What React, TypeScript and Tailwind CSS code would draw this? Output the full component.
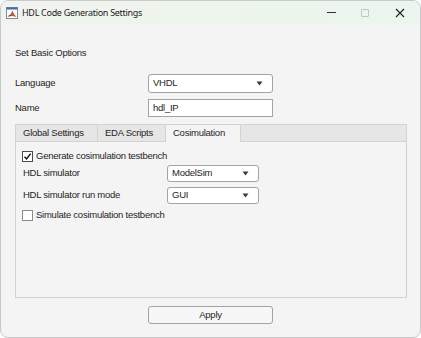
import React from "react";

const ui = { fontFamily: '"Liberation Sans", Arial, sans-serif' };
const titleFont = { fontFamily: '"Noto Sans", "Open Sans", sans-serif' };

function Caret() {
  return (
    <svg width="7" height="5" viewBox="0 0 7 5" className="shrink-0">
      <path d="M0.5 0.5h6L3.5 4.5z" fill="#3a3a3a" />
    </svg>
  );
}

function Dropdown({ value, className }: { value: string; className: string }) {
  return (
    <div
      className={`flex items-center justify-between rounded-[3px] border border-[#a3a3a3] bg-white pl-[4px] pr-[9px] text-[#1e1e1e] ${className}`}
    >
      <span>{value}</span>
      <Caret />
    </div>
  );
}

function Checkbox({ checked }: { checked: boolean }) {
  return (
    <div
      className={`flex h-[11px] w-[11px] shrink-0 items-center justify-center border bg-white ${
        checked ? "border-[#4a4a4a]" : "border-[#8c8c8c]"
      }`}
    >
      {checked && (
        <svg width="9" height="9" viewBox="0 0 9 9">
          <path d="M1.5 4.8 3.6 7 7.6 1.6" fill="none" stroke="#111" strokeWidth="1.4" />
        </svg>
      )}
    </div>
  );
}

function MatlabIcon() {
  return (
    <svg width="12" height="12" viewBox="0 0 12 12">
      <rect x="0.5" y="0.5" width="11" height="11" fill="#fff" stroke="#7a8aa0" />
      <rect x="0.5" y="0.5" width="11" height="2" fill="#3d6fb8" />
      <path d="M1.5 9.5 4.5 7.5 6.5 3.5 8 7 10.5 10 6 9z" fill="#d9531e" />
      <path d="M1.5 9.5 4.5 7.5 6 9z" fill="#2a66b0" />
    </svg>
  );
}

export default function App() {
  return (
    <div className="h-[338px] w-[421px] bg-white" style={ui}>
      <div className="flex h-[338px] w-[421px] flex-col overflow-hidden rounded-[8px] border border-[#c9c9c9] bg-[#f4f4f4]">
        <div className="flex h-[23px] shrink-0 items-center bg-gradient-to-r from-[#f1f3ef] via-[#edf5ec] to-[#eaf6ee]">
          <div className="ml-[5px] mr-[4px] flex">
            <MatlabIcon />
          </div>
          <span className="text-[9px] tracking-[-0.3px] text-[#1b1b1b]" style={titleFont}>
            HDL Code Generation Settings
          </span>
          <div className="ml-auto mr-[2px] flex items-center">
            <div className="flex w-[34px] justify-center">
              <div className="h-px w-[9px] bg-[#333]" />
            </div>
            <div className="flex w-[34px] justify-center">
              <div className="h-[8px] w-[8px] rounded-[1px] border border-[#c4c4c4]" />
            </div>
            <div className="flex w-[36px] justify-center">
              <svg width="10" height="10" viewBox="0 0 10 10">
                <path d="M1 1l8 8M9 1 1 9" stroke="#222" strokeWidth="1.1" />
              </svg>
            </div>
          </div>
        </div>

        <div className="flex flex-col whitespace-nowrap pl-[14px] text-[9.5px] tracking-[-0.25px] text-[#1e1e1e]">
          <div className="mt-[22px] h-[14px] leading-[14px]">Set Basic Options</div>

          <div className="mt-[14px] flex h-[19px] items-center">
            <span className="w-[133px]">Language</span>
            <Dropdown value="VHDL" className="h-[19px] w-[125px]" />
          </div>

          <div className="mt-[6px] flex h-[18px] items-center">
            <span className="w-[133px]">Name</span>
            <div className="flex h-[18px] w-[125px] items-center border border-[#a3a3a3] bg-white pl-[4px]">
              hdl_IP
            </div>
          </div>

          <div className="mt-[7px] flex h-[174px] w-[392px] flex-col border border-[#d2d2d2]">
            <div className="flex h-[17px] shrink-0">
              <div className="flex w-[82px] items-center border-r border-b border-[#d2d2d2] bg-[#e6e6e6] pl-[7px]">
                Global Settings
              </div>
              <div className="flex w-[68px] items-center border-r border-b border-[#d2d2d2] bg-[#e6e6e6] pl-[7px]">
                EDA Scripts
              </div>
              <div className="flex w-[75px] items-center border-r border-[#d2d2d2] bg-[#f4f4f4] pl-[7px]">
                Cosimulation
              </div>
              <div className="flex-1 border-b border-[#d2d2d2] bg-[#e6e6e6]" />
            </div>

            <div className="flex flex-col pl-[6px]">
              <div className="mt-[8px] flex h-[12px] items-center gap-[3px]">
                <Checkbox checked />
                <span>Generate cosimulation testbench</span>
              </div>
              <div className="mt-[3px] flex h-[17px] items-center">
                <span className="w-[145px] pl-px">HDL simulator</span>
                <Dropdown value="ModelSim" className="h-[17px] w-[92px]" />
              </div>
              <div className="mt-[5px] flex h-[17px] items-center">
                <span className="w-[145px] pl-px">HDL simulator run mode</span>
                <Dropdown value="GUI" className="h-[17px] w-[92px]" />
              </div>
              <div className="mt-[5px] flex h-[12px] items-center gap-[3px]">
                <Checkbox checked={false} />
                <span>Simulate cosimulation testbench</span>
              </div>
            </div>
          </div>

          <div className="ml-[133px] mt-[8px] flex h-[18px] w-[125px] items-center justify-center self-start rounded-[3px] border border-[#a3a3a3] bg-[#f7f7f7]">
            Apply
          </div>
        </div>
      </div>
    </div>
  );
}
